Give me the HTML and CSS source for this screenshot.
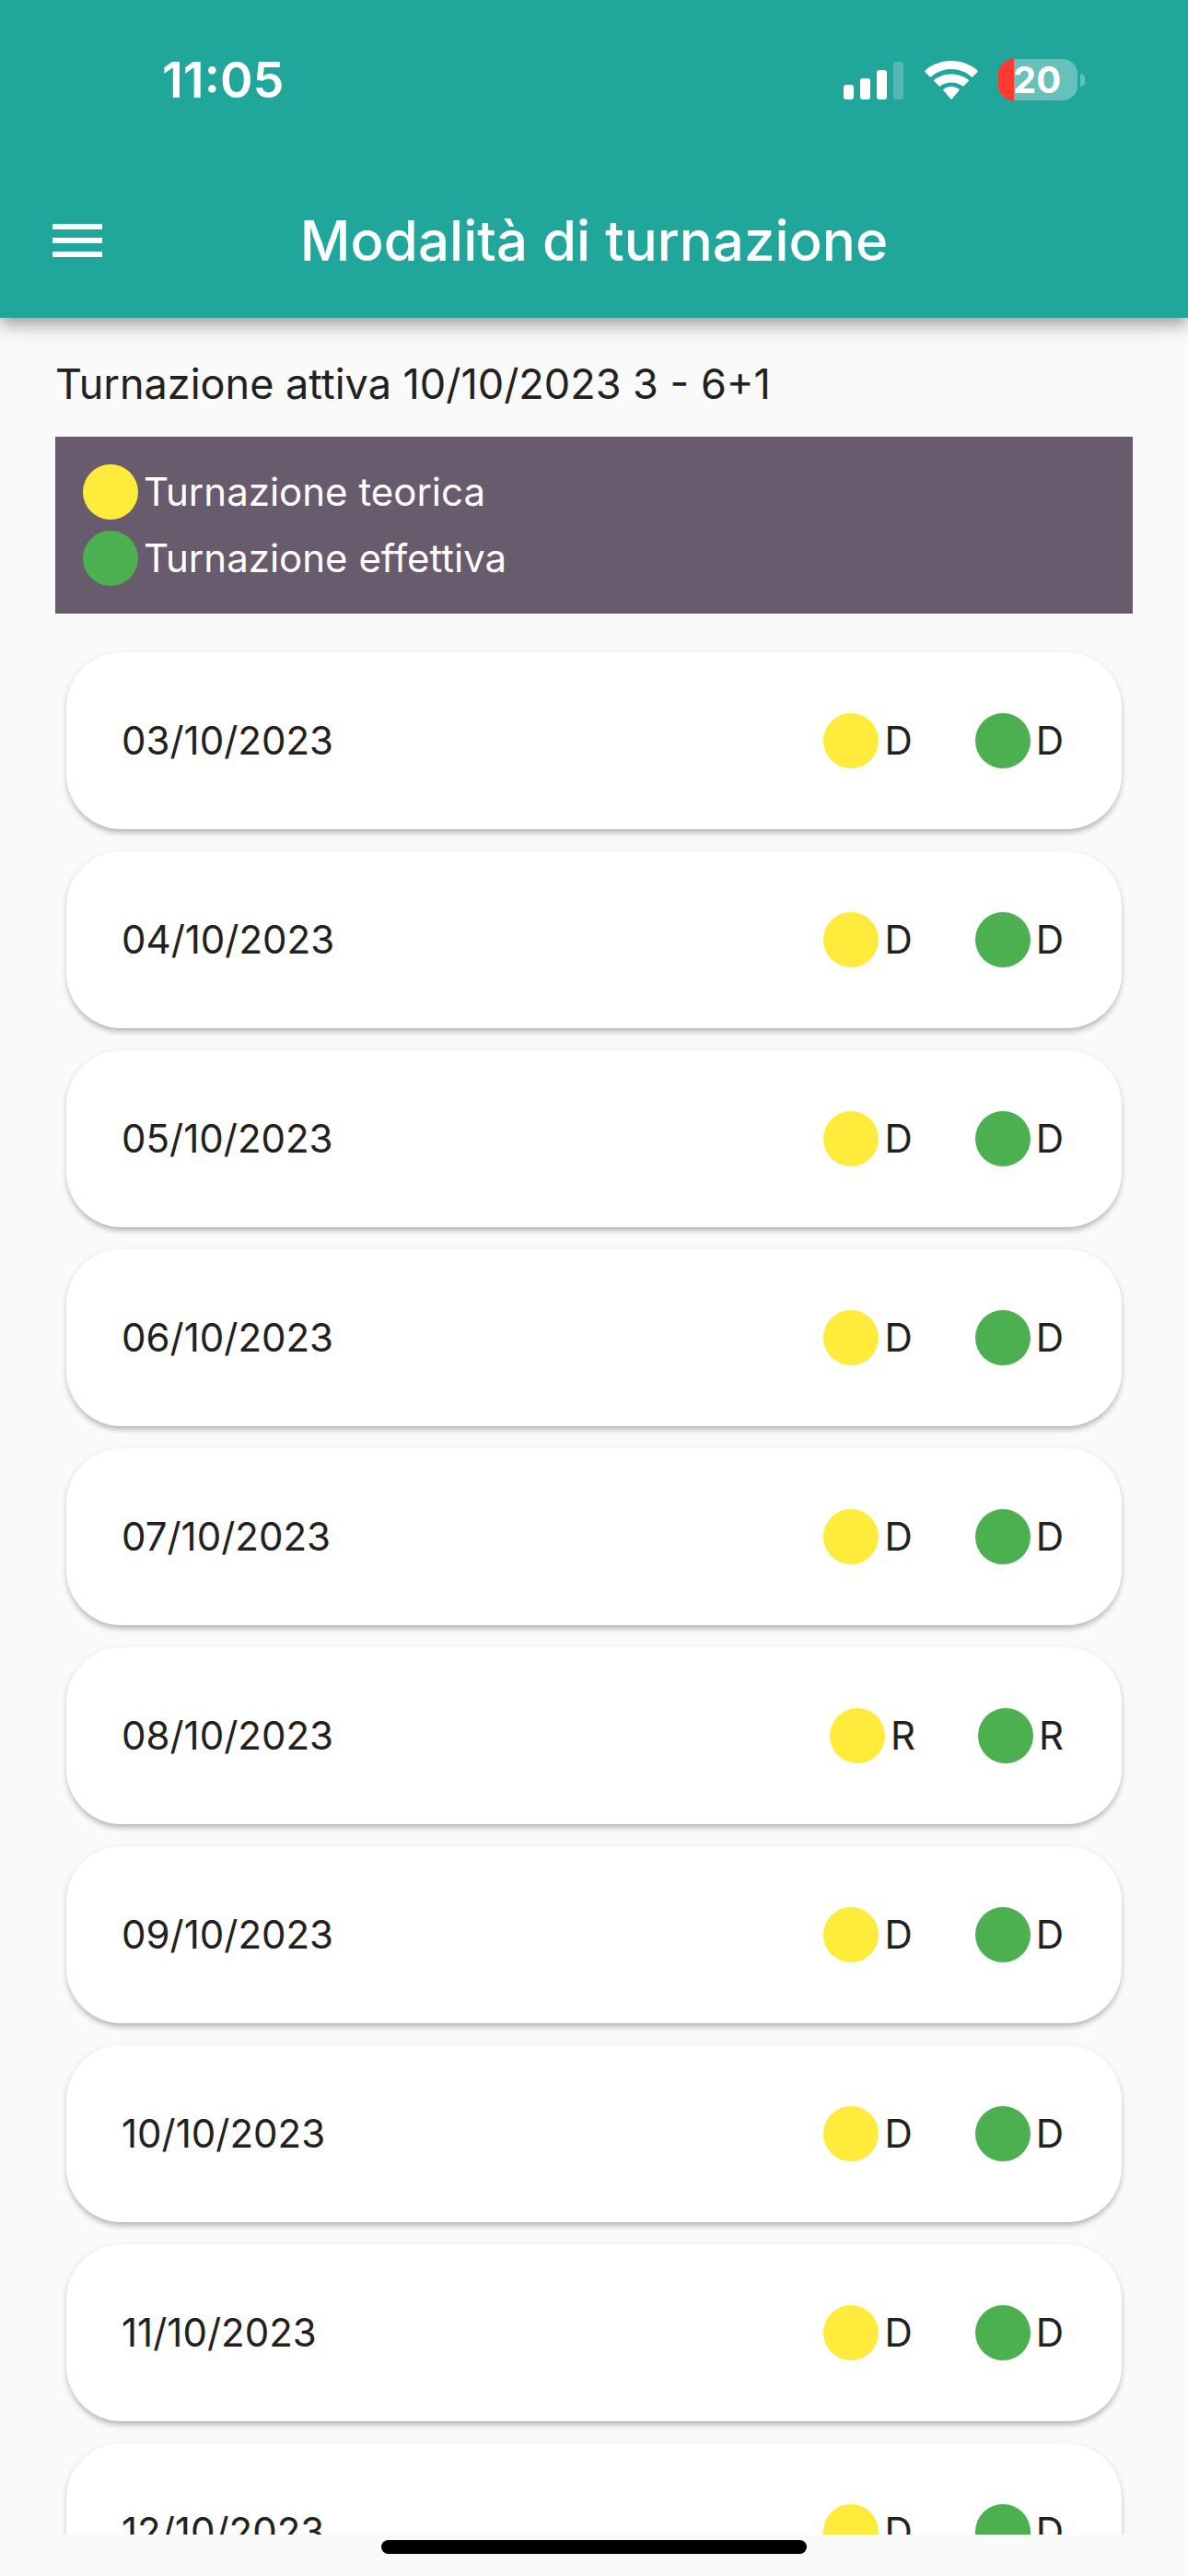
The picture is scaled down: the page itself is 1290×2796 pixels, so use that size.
FILE: index.html
```html
<!DOCTYPE html>
<html lang="it">
<head>
  <meta charset="utf-8">
  <meta name="viewport" content="width=device-width, initial-scale=1">
  <title>Modalità di turnazione</title>
  <link rel="stylesheet" href="styles.css">
</head>
<body>
  <div class="app">
    <header class="header">
      <div class="status">
        <time class="clock">11:05</time>
        <div class="status-icons">
          <svg class="signal" viewBox="0 0 65 42" aria-hidden="true">
            <rect x="0" y="26" width="11" height="16" rx="3"/>
            <rect x="18" y="19" width="11" height="23" rx="3"/>
            <rect x="36" y="10" width="11" height="32" rx="3"/>
            <rect x="54" y="1" width="11" height="41" rx="3" opacity=".22"/>
          </svg>
          <svg class="wifi" viewBox="0 0 58 42" aria-hidden="true">
            <path d="M.6 12.2a1.2 1.2 0 0 1 0-1.7C8.200 3.800 18.300 0 29 0s20.800 3.800 28.400 10.500a1.200 1.200 0 0 1 0 1.700l-5 5a1.200 1.200 0 0 1-1.700 0C44.800 12 37.200 9 29 9S13.200 12 7.300 17.200a1.200 1.200 0 0 1-1.700 0z"/>
            <path d="M10.500 22.200a1.200 1.200 0 0 1 0-1.700C15.500 17 22 14.600 29 14.600s13.500 2.400 18.500 5.900a1.200 1.200 0 0 1 0 1.700l-5 5a1.200 1.200 0 0 1-1.700 0C37.500 24.800 33.500 23.400 29 23.400s-8.500 1.400-11.800 3.800a1.200 1.200 0 0 1-1.700 0z"/>
            <path d="M20.600 32.300a1 1 0 0 1 0-1.500c2.300-1.700 5.200-2.700 8.400-2.700s6.100 1 8.400 2.700a1 1 0 0 1 0 1.500l-7.600 8.900a1.100 1.100 0 0 1-1.600 0z"/>
          </svg>
          <div class="battery"><span class="battery-body">20</span><span class="battery-tip"></span></div>
        </div>
      </div>
      <div class="toolbar">
        <button class="menu" type="button" aria-label="Menu">
          <svg class="menu-icon" viewBox="0 0 54 36" aria-hidden="true"><path d="M0 0h54v6H0zM0 15h54v6H0zM0 30h54v6H0z"/></svg>
        </button>
        <h1 class="title">Modalità di turnazione</h1>
      </div>
    </header>
    <main class="main">
      <p class="active">Turnazione attiva 10/10/2023 3 - 6+1</p>
      <div class="legend">
        <div class="mark"><i class="dot yellow"></i>Turnazione teorica</div>
        <div class="mark"><i class="dot green"></i>Turnazione effettiva</div>
      </div>
      <ul class="days">
        <li class="day"><time class="date">03/10/2023</time><span class="mark"><i class="dot yellow"></i>D</span><span class="mark"><i class="dot green"></i>D</span></li>
        <li class="day"><time class="date">04/10/2023</time><span class="mark"><i class="dot yellow"></i>D</span><span class="mark"><i class="dot green"></i>D</span></li>
        <li class="day"><time class="date">05/10/2023</time><span class="mark"><i class="dot yellow"></i>D</span><span class="mark"><i class="dot green"></i>D</span></li>
        <li class="day"><time class="date">06/10/2023</time><span class="mark"><i class="dot yellow"></i>D</span><span class="mark"><i class="dot green"></i>D</span></li>
        <li class="day"><time class="date">07/10/2023</time><span class="mark"><i class="dot yellow"></i>D</span><span class="mark"><i class="dot green"></i>D</span></li>
        <li class="day"><time class="date">08/10/2023</time><span class="mark"><i class="dot yellow"></i>R</span><span class="mark"><i class="dot green"></i>R</span></li>
        <li class="day"><time class="date">09/10/2023</time><span class="mark"><i class="dot yellow"></i>D</span><span class="mark"><i class="dot green"></i>D</span></li>
        <li class="day"><time class="date">10/10/2023</time><span class="mark"><i class="dot yellow"></i>D</span><span class="mark"><i class="dot green"></i>D</span></li>
        <li class="day"><time class="date">11/10/2023</time><span class="mark"><i class="dot yellow"></i>D</span><span class="mark"><i class="dot green"></i>D</span></li>
        <li class="day"><time class="date">12/10/2023</time><span class="mark"><i class="dot yellow"></i>D</span><span class="mark"><i class="dot green"></i>D</span></li>
      </ul>
    </main>
    <footer class="home"><span class="home-bar"></span></footer>
  </div>
</body>
</html>
```
FILE: styles.css
```css
* {
  box-sizing: border-box;
}

body {
  margin: 0;
  background: #fafafa;
  color: #212121;
  font: 42px/60px Inter, "Liberation Sans", sans-serif;
}

.app {
  display: flex;
  flex-direction: column;
  height: 100vh;
}

/* Header */
.header {
  position: relative;
  flex: none;
  background: #21a69b;
  color: #fff;
  box-shadow: 0 6px 12px -3px rgba(0, 0, 0, .2), 0 12px 15px rgba(0, 0, 0, .14), 0 3px 30px rgba(0, 0, 0, .12);
}

.header svg {
  display: block;
  fill: currentColor;
}

.status {
  display: flex;
  align-items: center;
  justify-content: space-between;
  height: 177px;
  padding: 0 112px 4px 176px;
}

.clock {
  font-size: 54px;
  font-weight: 600;
}

.status-icons {
  display: flex;
  align-items: center;
}

.signal {
  width: 65px;
  height: 42px;
  margin-right: 23px;
}

.wifi {
  width: 58px;
  height: 42px;
  margin-right: 22px;
}

.battery {
  display: flex;
  align-items: center;
  gap: 3px;
}

.battery-body {
  width: 86px;
  height: 45px;
  padding-left: 16px;
  border-radius: 16px;
  background: linear-gradient(90deg, #ff3b30 17px, #65c1ba 17px);
  font-size: 40px;
  font-weight: 700;
  line-height: 45px;
}

.battery-tip {
  width: 5px;
  height: 14px;
  border-radius: 0 7px 7px 0;
  background: #65c1ba;
}

.toolbar {
  display: grid;
  grid-template-columns: 1fr auto 1fr;
  align-items: center;
  height: 168px;
  padding: 0 57px;
}

.menu {
  justify-self: start;
  padding: 0;
  border: 0;
  background: none;
  color: inherit;
}

.menu-icon {
  width: 54px;
  height: 36px;
}

.title {
  margin: 0;
  font-size: 60px;
  font-weight: 450;
  line-height: 72px;
}

/* Content */
.main {
  flex: 1;
  min-height: 0;
  overflow: hidden;
  padding: 42px 60px 0;
}

.active {
  margin: 0 0 27px;
  font-size: 45px;
}

.legend {
  display: flex;
  flex-direction: column;
  gap: 12px;
  padding: 30px;
  background: #685b6e;
  color: #fff;
}

.mark {
  display: flex;
  align-items: center;
  gap: 6px;
}

.dot {
  width: 60px;
  height: 60px;
  border-radius: 50%;
}

.yellow {
  background: #ffeb3b;
}

.green {
  background: #4caf50;
}

.days {
  display: flex;
  flex-direction: column;
  gap: 24px;
  margin: 0;
  padding: 42px 12px 12px;
  list-style: none;
}

.day {
  display: flex;
  align-items: center;
  gap: 68px;
  height: 192px;
  padding: 0 63px 0 60px;
  border-radius: 60px;
  background: #fff;
  box-shadow: 0 6px 6px -3px rgba(0, 0, 0, .16), 0 3px 6px rgba(0, 0, 0, .1), 0 3px 9px rgba(0, 0, 0, .08);
}

.date {
  margin-right: auto;
}

/* Bottom safe area with the home indicator */
.home {
  display: flex;
  flex: none;
  justify-content: center;
  height: 45px;
  padding-top: 6px;
}

.home-bar {
  width: 462px;
  height: 15px;
  border-radius: 8px;
  background: #000;
}
```
